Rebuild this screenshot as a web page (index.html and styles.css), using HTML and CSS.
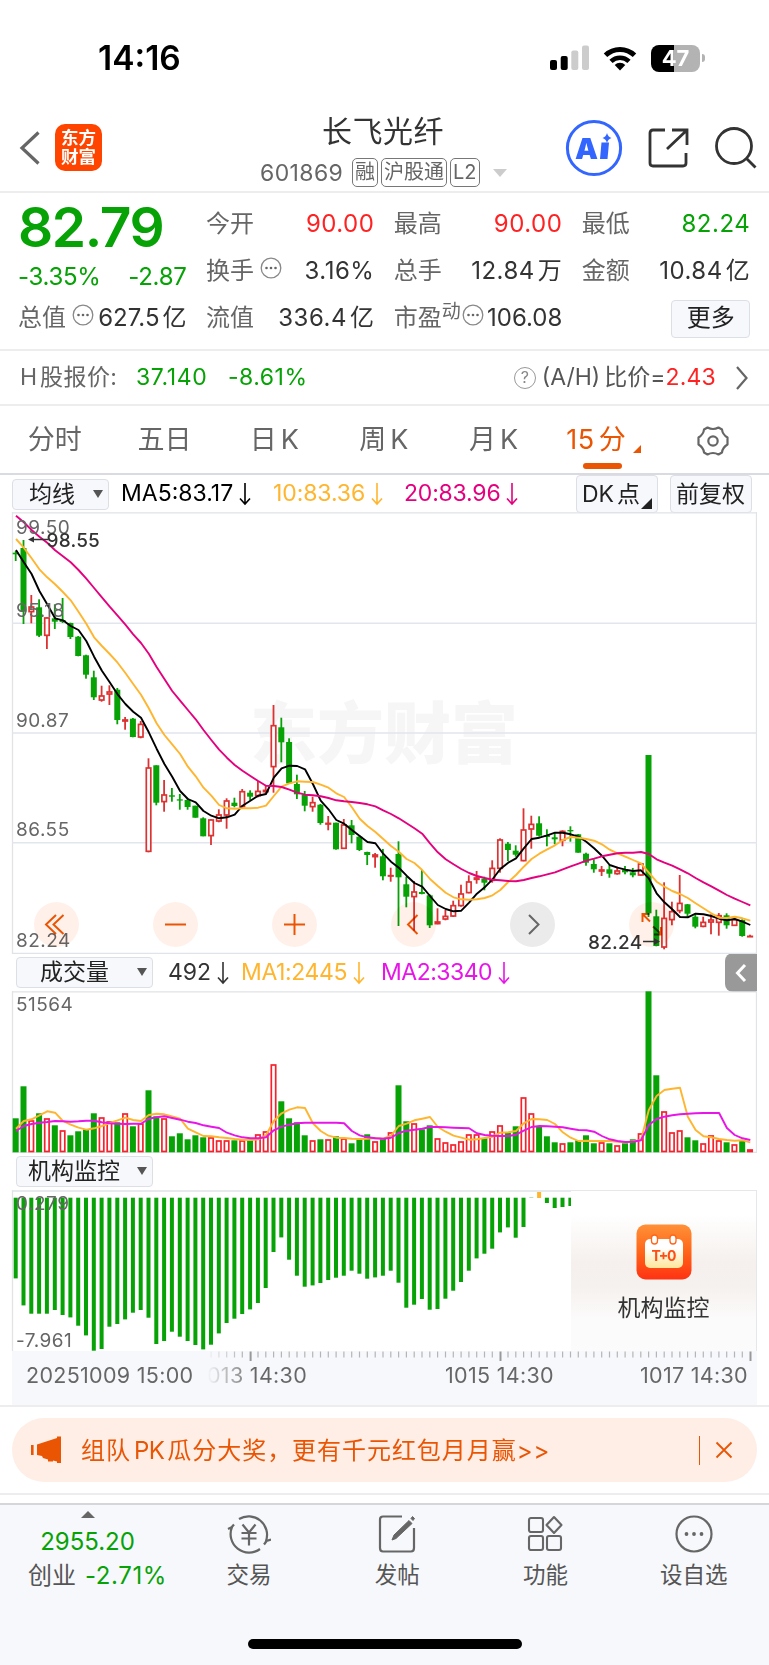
FILE: index.html
```html
<!DOCTYPE html>
<html lang="zh-CN">
<head>
  <meta charset="UTF-8" />
  <meta name="viewport" content="width=device-width, initial-scale=1" />
  <title>长飞光纤 601869</title>
  <link rel="stylesheet" href="styles.css">
</head>
<body>

  <div class="status-bar">
    <span class="clock">14:16</span>
    <div class="status-icons">
      <svg width="40" height="26" viewBox="0 0 40 26">
        <rect x="0" y="15" width="7" height="10" rx="2" />
        <rect x="10.7" y="11" width="7" height="14" rx="2" />
        <rect x="21.3" y="5.5" width="7" height="19.5" rx="2" fill="#ccc" />
        <rect x="32" y="0.5" width="7" height="24.500" rx="2" fill="#ccc" />
      </svg>
      <svg class="wifi" width="34" height="25" viewBox="0 0 34 25">
        <path d="M2.500 9.300a21 21 0 0 1 29 0" fill="none" stroke="#000" stroke-width="5" />
        <path d="M8 15.300a13 13 0 0 1 18 0" fill="none" stroke="#000" stroke-width="4.600" />
        <path d="M17 24.500l-5.300-5.600a7.600 7.600 0 0 1 10.600 0z" />
      </svg>
      <div class="battery"><span>47</span></div>
      <div class="battery-cap"></div>
    </div>
  </div>

  <header class="header">
    <svg class="back" width="22" height="36" viewBox="0 0 22 36"><path d="M19.500 2.500L3 18l16.500 15.500" fill="none" stroke="#666" stroke-width="3.200" /></svg>
    <div class="logo">东方<br>财富</div>
    <div class="title">
      <h1>长飞光纤</h1>
      <div class="code"><span class="number">601869</span><b>融</b><b>沪股通</b><b>L2</b><i></i></div>
    </div>
    <div class="actions">
      <svg width="58" height="58" viewBox="0 0 58 58">
        <circle cx="29" cy="29" r="26.600" fill="#fff" stroke="#3366ff" stroke-width="3" />
        <text x="10" y="39.500" class="ai-text">A</text>
        <path d="M36.500 23.500h7.500l-1.500 16.500h-7.500z" fill="#3366ff" />
        <path d="M42 14q1 4 4.500 5q-3.500 1-4.500 5q-1-4-4.500-5q3.500-1 4.500-5z" fill="#3366ff" />
      </svg>
      <svg width="42" height="42" viewBox="0 0 42 42" fill="none" stroke="#333" stroke-width="2.800">
        <path d="M17 3H5q-3 0-3 3v30q0 3 3 3h30q3 0 3-3V26" />
        <path d="M24 3h15v15M38.500 3.500L19 22" />
      </svg>
      <svg width="44" height="42" viewBox="0 0 44 42" fill="none" stroke="#333" stroke-width="2.800">
        <circle cx="20" cy="19" r="17.500" /><path d="M32 31l9.500 9.500" />
      </svg>
    </div>
  </header>

  <section class="quote">
    <div class="price down">82.79</div>
    <div class="cell"><label>今开</label><span class="up">90.00</span></div>
    <div class="cell"><label>最高</label><span class="up">90.00</span></div>
    <div class="cell"><label>最低</label><span class="down">82.24</span></div>
    <div class="cell change down"><span>-3.35%</span><span>-2.87</span></div>
    <div class="cell"><label>换手<svg class="dots"><use href="#dots" /></svg></label><span>3.16%</span></div>
    <div class="cell"><label>总手</label><span>12.84<em>万</em></span></div>
    <div class="cell"><label>金额</label><span>10.84<em>亿</em></span></div>
    <div class="cell tight"><label>总值<svg class="dots"><use href="#dots" /></svg></label><span>627.5<em>亿</em></span></div>
    <div class="cell"><label>流值</label><span>336.4<em>亿</em></span></div>
    <div class="cell tight"><label>市盈<sup>动</sup><svg class="dots"><use href="#dots" /></svg></label><span>106.08</span></div>
    <div class="cell more"><button>更多</button></div>
  </section>

  <svg class="symbols">
    <symbol id="dots" viewBox="0 0 22 22">
      <circle cx="11" cy="11" r="9.800" fill="none" stroke="#888" stroke-width="1.300" />
      <circle cx="6.500" cy="11" r="1.300" fill="#666" /><circle cx="11" cy="11" r="1.300" fill="#666" /><circle cx="15.500" cy="11" r="1.300" fill="#666" />
    </symbol>
    <symbol id="arrow" viewBox="0 0 12 24">
      <path d="M6 1v21M1 16.500l5 5.500l5-5.500" fill="none" stroke="currentColor" stroke-width="1.600" />
    </symbol>
  </svg>

  <section class="h-share">
    <span class="h-label">H<em>股报价:</em></span>
    <span class="down h-price">37.140</span>
    <span class="down">-8.61%</span>
    <div class="ratio">
      <i class="help">?</i>
      <span class="ratio-label">(A/H)<em>比价=</em></span><span class="up">2.43</span>
      <svg width="14" height="28" viewBox="0 0 14 28"><path d="M2 3l9.500 11L2 25" fill="none" stroke="#666" stroke-width="2.200" /></svg>
    </div>
  </section>

  <nav class="tabs">
    <span>分时</span>
    <span>五日</span>
    <span>日<u>K</u></span>
    <span>周<u>K</u></span>
    <span>月<u>K</u></span>
    <span class="active">15<u>分</u><i></i></span>
    <svg width="34" height="32" viewBox="0 0 34 32" fill="none" stroke="#666" stroke-width="2.200">
      <path d="M11.500 2.500Q17 5.500 22.500 2.500L26 4.500Q26.500 9.500 31.500 12.500V19.500Q26.500 22.500 26 27.500L22.500 29.500Q17 26.500 11.500 29.500L8 27.500Q7.500 22.500 2.500 19.500V12.500Q7.500 9.500 8 4.500Z" stroke-linejoin="round" />
      <circle cx="17" cy="16" r="4.700" />
    </svg>
  </nav>

  <div class="ma-row">
    <div class="select">均线<i></i></div>
    <span class="ma5">MA5:83.17<svg class="arrow"><use href="#arrow" /></svg></span>
    <span class="ma10">10:83.36<svg class="arrow"><use href="#arrow" /></svg></span>
    <span class="ma20">20:83.96<svg class="arrow"><use href="#arrow" /></svg></span>
    <div class="right-buttons">
      <div class="box dk">DK<em>点</em><i></i></div>
      <div class="box">前复权</div>
    </div>
  </div>

  <div class="panel k-panel">
    <svg id="kline" width="757" height="442"></svg>
    <div class="controls">
      <svg width="45" height="45" viewBox="0 0 45 45"><path d="M22 13L12 22.500L22 32M29.500 13L19.500 22.500L29.500 32" /></svg>
      <svg width="45" height="45" viewBox="0 0 45 45"><path d="M12 22.500h21" /></svg>
      <svg width="45" height="45" viewBox="0 0 45 45"><path d="M12 22.500h21M22.500 12v21" /></svg>
      <svg width="45" height="45" viewBox="0 0 45 45"><path d="M26.500 13L17 22.500L26.500 32" /></svg>
      <svg class="next" width="45" height="45" viewBox="0 0 45 45"><path d="M19 13L28.500 22.500L19 32" /></svg>
      <svg width="45" height="45" viewBox="0 0 45 45"><path d="M20.500 12h-7v8M14 12.500l7 7M24 24.500l7.500 7M32 25v7.500h-7" /></svg>
    </div>
  </div>

  <div class="sub-head volume-head">
    <div class="select wide">成交量<i></i></div>
    <span class="vol">492<svg class="arrow"><use href="#arrow" /></svg></span>
    <span class="ma10">MA1:2445<svg class="arrow"><use href="#arrow" /></svg></span>
    <span class="vma2">MA2:3340<svg class="arrow"><use href="#arrow" /></svg></span>
    <div class="drawer"><svg width="14" height="22" viewBox="0 0 14 22"><path d="M11 3L3.500 11L11 19" fill="none" stroke="#fff" stroke-width="3" /></svg></div>
  </div>
  <div class="panel"><svg id="volume" width="757" height="162"></svg></div>

  <div class="sub-head">
    <div class="select wide org">机构监控<i></i></div>
  </div>
  <div class="panel org-panel">
    <svg id="org" width="571" height="161"></svg>
    <div class="org-card">
      <svg width="56" height="56" viewBox="0 0 56 56">
        <defs>
          <linearGradient id="orange" x1="0" y1="0" x2="0" y2="1"><stop offset="0" stop-color="#ff9138" /><stop offset=".5" stop-color="#ff6518" /><stop offset="1" stop-color="#ff3213" /></linearGradient>
          <linearGradient id="cream" x1="0" y1="0" x2="0" y2="1"><stop offset=".3" stop-color="#fff" /><stop offset="1" stop-color="#ffe69a" /></linearGradient>
        </defs>
        <rect x="0.500" y="0.500" width="55" height="55" rx="9" fill="url(#orange)" />
        <rect x="9" y="15" width="38" height="29" rx="5" fill="url(#cream)" />
        <rect x="15.500" y="11" width="6" height="9" rx="3" fill="#fff" stroke="#ff6518" stroke-width="1.300" />
        <rect x="34" y="11" width="6" height="9" rx="3" fill="#fff" stroke="#ff6518" stroke-width="1.300" />
        <text x="28" y="36.500" text-anchor="middle" class="t0" textLength="25">T+0</text>
      </svg>
      <span>机构监控</span>
    </div>
  </div>

  <div class="axis">
    <svg id="ticks" width="745" height="12"></svg>
    <div class="dates"><span>20251009 15:00</span><span class="faded">013 14:30</span><span>1015 14:30</span><span>1017 14:30</span></div>
  </div>

  <div class="ad-wrap">
    <div class="ad">
      <svg width="32" height="28" viewBox="0 0 32 28" fill="#ea5504">
        <rect x="0" y="9" width="2.600" height="10" /><path d="M6 8.500L26 2V0.500h4V27h-4v-1.500l-4-1v1h-5v-2l-5-1.500l-1-2l-5-1z" />
      </svg>
      <span class="ad-text">组队<u>PK</u>瓜分大奖，更有千元红包月月赢&gt;&gt;</span>
      <i class="divider"></i>
      <svg width="18" height="18" viewBox="0 0 18 18"><path d="M1.500 1.500l15 15M16.500 1.500l-15 15" stroke="#ea5504" stroke-width="1.800" /></svg>
    </div>
  </div>

  <footer class="footer">
    <div class="index">
      <i></i>
      <span class="down">2955.20</span>
      <div>创业<span class="down">-2.71%</span></div>
    </div>
    <div class="item">
      <svg width="44" height="40" viewBox="0 0 44 40" fill="none" stroke="#666" stroke-width="2.200">
        <path d="M12 5A18.500 18.500 0 0 1 39 27l5-1.500M37 30.500l3-4M33 35A18.500 18.500 0 0 1 5 13L1 15M3.500 14.500L7 10.500" />
        <path d="M15.500 10.500l6.500 8l6.500-8M14.500 19h15M14.500 24.500h15M22 18.500v13" />
      </svg>
      <span>交易</span>
    </div>
    <div class="item">
      <svg width="38" height="40" viewBox="0 0 38 40" fill="none" stroke="#666" stroke-width="2.200">
        <path d="M24 2.500H5q-3 0-3 3V34q0 3.500 3 3.500h28q3 0 3-3.500V14" />
        <path d="M14 26l2-5L31 6.500l3 3L18 24.500zM33 4.500l1.500-2l2 2l-1.500 2z" fill="#666" stroke-width="1" />
      </svg>
      <span>发帖</span>
    </div>
    <div class="item">
      <svg width="36" height="40" viewBox="0 0 36 40" fill="none" stroke="#666" stroke-width="2.100">
        <rect x="2" y="4" width="14" height="14" rx="2" /><rect x="2" y="22" width="14" height="14" rx="2" /><rect x="20" y="22" width="14" height="14" rx="2" />
        <path d="M27 3l7.500 8l-7.500 8l-7.500-8z" stroke-linejoin="round" />
      </svg>
      <span>功能</span>
    </div>
    <div class="item">
      <svg width="40" height="40" viewBox="0 0 40 40">
        <circle cx="20" cy="20" r="17.500" fill="none" stroke="#666" stroke-width="2.200" />
        <circle cx="12.500" cy="20" r="1.900" fill="#666" /><circle cx="20" cy="20" r="1.900" fill="#666" /><circle cx="27.500" cy="20" r="1.900" fill="#666" />
      </svg>
      <span>设自选</span>
    </div>
    <div class="home-bar"></div>
  </footer>

  <script src="chart.js"></script>
</body>
</html>
```

FILE: styles.css
```css
* {
  box-sizing: border-box;
}

body {
  margin: 0;
  width: 769px;
  height: 1665px;
  overflow: hidden;
  background: #fff;
  color: #333;
  font-family: Inter, "Noto Sans CJK SC", sans-serif;
  font-size: 24px;
  line-height: 1.2;
}

em, i, u {
  font-style: normal;
  text-decoration: none;
}

svg {
  display: block;
  flex-shrink: 0;
}

.symbols {
  display: none;
}

.up { color: #ff2222; }
.down { color: #06a206; }

/* status bar */
.status-bar {
  height: 104px;
  padding: 37px 64px 0 98px;
  display: flex;
  justify-content: space-between;
}

.clock {
  font-size: 33.5px;
  font-weight: 600;
  color: #000;
  line-height: 42px;
}

.status-icons {
  display: flex;
  align-items: center;
  height: 42px;
}

.wifi {
  margin: 0 14px 0 13px;
}

.battery {
  width: 49px;
  height: 27px;
  border-radius: 8px;
  background: linear-gradient(90deg, #000 47%, #b3b3b3 47%);
  color: #fff;
  font-size: 22px;
  font-weight: 700;
  line-height: 27px;
  text-align: center;
}

.battery-cap {
  width: 3px;
  height: 8px;
  margin-left: 2px;
  border-radius: 0 4px 4px 0;
  background: #b3b3b3;
}

/* header */
.header {
  height: 89px;
  border-bottom: 2px solid #ededed;
  padding: 0 11px 0 19px;
  display: grid;
  grid-template-columns: 36px 48px 1fr 193px;
}

.back {
  margin-top: 26px;
}

.logo {
  width: 47px;
  height: 47px;
  margin-top: 20px;
  border-radius: 10px;
  background: #ff4400;
  color: #fff;
  font-size: 17.5px;
  font-weight: 700;
  line-height: 19px;
  text-align: center;
  padding-top: 4px;
}

.title {
  padding-left: 157px;
}

.title h1 {
  margin: 8px 0 0 62px;
  font-size: 30px;
  font-weight: 400;
  line-height: 38px;
  letter-spacing: 0.5px;
  white-space: nowrap;
}

.code {
  margin-top: 8px;
  display: flex;
  align-items: center;
  color: #666;
  font-size: 23px;
  line-height: 28px;
}

.code .number {
  width: 92px;
  letter-spacing: 0.4px;
}

.code b {
  height: 29px;
  margin-right: 3px;
  padding: 0 2px;
  border: 1.5px solid #777;
  border-radius: 5px;
  font-weight: 400;
  font-size: 20px;
  line-height: 26px;
  white-space: nowrap;
}

.code i {
  margin-left: 10px;
  border: 7px solid transparent;
  border-top: 8px solid #ccc;
  border-bottom: 0;
}

.actions {
  display: flex;
  align-items: center;
  justify-content: space-between;
  height: 88px;
}

.ai-text {
  font-size: 29px;
  font-weight: 900;
  fill: #3366ff;
}

/* quote grid */
.quote {
  height: 158px;
  border-bottom: 2px solid #ededed;
  padding: 8px 18px 0;
  display: grid;
  grid-template-columns: repeat(4, 168.5px);
  grid-template-rows: repeat(3, 47px);
  column-gap: 19.4px;
}

.price {
  font-size: 55px;
  font-weight: 600;
  line-height: 53px;
  letter-spacing: -1.4px;
}

.cell {
  display: flex;
  align-items: center;
  justify-content: space-between;
  white-space: nowrap;
}

.cell > span {
  letter-spacing: 0.5px;
}

.cell label {
  display: flex;
  color: #666;
}

.cell em {
  margin-left: 3px;
}

.cell.change {
  padding-top: 12px;
}

.cell.change > span {
  letter-spacing: -0.3px;
}

.cell.tight > span {
  letter-spacing: 0;
}

.cell sup {
  font-size: 19px;
  line-height: 16px;
}

.dots {
  width: 22px;
  height: 22px;
  margin-left: 6px;
}

.tight .dots {
  margin-left: 6px;
}

.tight sup + .dots {
  margin-left: 1px;
}

.more {
  justify-content: flex-end;
}

.more button {
  width: 79px;
  height: 38px;
  padding: 0;
  border: 1.5px solid #dcdfe6;
  border-radius: 4px;
  background: #f7f8fb;
  color: #222;
  font: inherit;
}

/* H share row */
.h-share {
  height: 55px;
  border-bottom: 2px solid #ededed;
  padding: 0 20px;
  display: flex;
  align-items: center;
  font-size: 23px;
}

.h-label {
  width: 116px;
  color: #666;
}

.h-label em {
  margin-left: 3px;
  letter-spacing: 0.4px;
}

.h-price {
  width: 92px;
  letter-spacing: 0.6px;
}

.h-price + span {
  letter-spacing: 0.5px;
}

.ratio {
  margin-left: auto;
  display: flex;
  align-items: center;
  white-space: nowrap;
}

.ratio-label {
  color: #555;
}

.ratio em {
  margin-left: 4px;
}

.help {
  width: 22px;
  height: 22px;
  margin-right: 6px;
  border: 1.4px solid #999;
  border-radius: 50%;
  color: #888;
  font-size: 16px;
  line-height: 19px;
  text-align: center;
}

.ratio svg {
  margin-left: 19px;
}

.ratio .up {
  letter-spacing: 0.2px;
}

/* period tabs */
.tabs {
  height: 69px;
  border-bottom: 2px solid #d9dbe1;
  padding-top: 2px;
  display: grid;
  grid-template-columns: repeat(7, 109.700px);
  justify-items: center;
  align-items: center;
  color: #666;
  font-size: 27px;
}

.tabs u {
  margin-left: 4px;
}

.tabs .active {
  position: relative;
  width: 74px;
  color: #ea5504;
  letter-spacing: 0.5px;
}

.active::after {
  content: "";
  position: absolute;
  left: 17px;
  bottom: -12px;
  width: 39px;
  height: 6px;
  border-radius: 3px;
  background: #ea5504;
}

.active i {
  position: absolute;
  right: -1px;
  bottom: 4px;
  border-left: 8px solid transparent;
  border-bottom: 8px solid #ea5504;
}

/* indicator rows */
.ma-row, .sub-head {
  display: flex;
  align-items: center;
  height: 38px;
  padding-left: 12px;
  font-size: 23px;
  white-space: nowrap;
}

.ma-row {
  height: 37px;
  padding-top: 1px;
}

.ma-row > span, .sub-head > span {
  display: flex;
  align-items: center;
}

.select {
  position: relative;
  width: 97px;
  height: 31px;
  padding-left: 16px;
  border: 1.5px solid #dcdfe6;
  border-radius: 4px;
  background: #f7f8fb;
  color: #222;
  line-height: 29px;
}

.select i {
  position: absolute;
  right: 5px;
  top: 10px;
  border: 5px solid transparent;
  border-top: 8px solid #555;
  border-bottom: 0;
}

.arrow {
  width: 12px;
  height: 24px;
  margin-left: 6px;
}

.ma5 { width: 152px; margin-left: 12px; color: #000; }
.ma10 { width: 131px; color: #ffb52e; letter-spacing: -0.1px; }
.ma20 { color: #e4007f; letter-spacing: -0.2px; }
.vma2 { color: #e815e8; letter-spacing: -0.5px; }

.right-buttons {
  display: flex;
  gap: 12px;
  margin: 0 17px 0 auto;
}

.box {
  position: relative;
  width: 82px;
  height: 38px;
  border: 1.5px solid #dcdfe6;
  border-radius: 4px;
  background: #f7f8fb;
  color: #222;
  line-height: 36px;
  padding-left: 5px;
}

.box em {
  margin-left: 3px;
}

.dk i {
  position: absolute;
  right: 5px;
  bottom: 3px;
  border-left: 11px solid transparent;
  border-bottom: 11px solid #222;
}

.sub-head {
  height: 37px;
  padding-left: 16px;
}

.sub-head .ma10 {
  width: 140px;
  letter-spacing: -0.4px;
}

.wide {
  width: 137px;
  padding-left: 23px;
}

.wide.org {
  padding-left: 11px;
}

.vol {
  width: 73px;
  margin-left: 15px;
}

.drawer {
  width: 32px;
  height: 39px;
  margin: 0 12px 0 auto;
  border-radius: 8px 0 0 8px;
  background: #999;
  display: flex;
  align-items: center;
  justify-content: center;
}

/* charts */
.panel {
  position: relative;
  width: 757px;
}

.label {
  font-size: 19px;
  letter-spacing: 0.5px;
  fill: #666;
}

.mark {
  font-size: 19px;
  letter-spacing: 0.2px;
  font-weight: 500;
  fill: #333;
}

.watermark {
  font-size: 67px;
  font-weight: 900;
  fill: #f6f6f6;
}

.controls {
  position: absolute;
  left: 33.5px;
  top: 390px;
  display: flex;
  gap: 74px;
  mix-blend-mode: multiply;
}

.controls svg {
  border-radius: 50%;
  background: #fff1ea;
  fill: none;
  stroke: #ea5504;
  stroke-width: 2;
}

.controls .next {
  background: #ebebeb;
  stroke: #666;
}

.org-panel {
  display: flex;
}

.org-card {
  width: 186px;
  height: 161px;
  padding-top: 33px;
  border-top: 1px solid #e5e7eb;
  border-right: 1px solid #e5e7eb;
  background: linear-gradient(#fff 15%, #f5f0ed 45%, #f5f1ee 60%, #fcfbfb 80%, #fbfbfc);
  display: flex;
  flex-direction: column;
  align-items: center;
  gap: 15px;
  font-size: 23px;
}

.t0 {
  font-size: 14px;
  font-weight: 700;
  fill: #ff4d14;
}

.axis {
  width: 745px;
  height: 54px;
  margin-left: 12px;
  background: #f7f8fb;
}

.dates {
  padding: 0 9px 0 14px;
  display: flex;
  font-size: 21.5px;
  letter-spacing: 0.3px;
  line-height: 24px;
  color: #666;
}

.dates span:nth-child(1) { width: 181px; }
.dates span:nth-child(2) { width: 238px; }
.dates span:nth-child(4) { margin-left: auto; }

.dates .faded {
  color: transparent;
  background: linear-gradient(90deg, #f7f8fb, #666 20%);
  -webkit-background-clip: text;
  background-clip: text;
}

/* promo strip */
.ad-wrap {
  height: 90px;
  border-top: 2px solid #ededf0;
  border-bottom: 2px solid #ededf0;
  padding: 11px 12px;
}

.ad {
  height: 64px;
  border-radius: 32px;
  background: #feeee6;
  padding: 0 24px 0 19px;
  display: flex;
  align-items: center;
  color: #ea5504;
}

.ad-text {
  margin: 2px 0 0 18px;
  font-size: 24px;
  letter-spacing: 0.95px;
  white-space: nowrap;
}

.ad-text u {
  margin: 0 3px;
  letter-spacing: -0.5px;
}

.divider {
  width: 1.5px;
  height: 29px;
  margin: 0 15px 0 auto;
  background: #ea5504;
}

/* bottom bar */
.footer {
  position: relative;
  height: 162px;
  margin-top: 8px;
  border-top: 2px solid #d5d6da;
  background: #f7f8fb;
  display: flex;
  color: #555;
}

.index {
  width: 175px;
  padding-top: 6px;
  display: flex;
  flex-direction: column;
  align-items: center;
}

.index i {
  border: 7px solid transparent;
  border-bottom: 7px solid #666;
  border-top: 0;
}

.index > span {
  margin-top: 10px;
}

.index > div {
  margin: 5px 0 0 20px;
  white-space: nowrap;
}

.index > div span {
  margin-left: 9px;
  letter-spacing: 0.6px;
}

.item {
  width: 148.2px;
  padding-top: 9px;
  display: flex;
  flex-direction: column;
  align-items: center;
  gap: 7px;
  font-size: 22.5px;
}

.home-bar {
  position: absolute;
  left: 248px;
  bottom: 16px;
  width: 274px;
  height: 10px;
  border-radius: 5px;
  background: #000;
}
```

FILE: chart.js
```js
const GREEN = "#06a206";
const RED = "#dc3232";
const STEP = 7.812;
const X0 = 15.7;

// color, high, low, body top, body bottom
const candles = `g39,49,40.7,42.3 g28,112,36,99.7 r83,111.3,94.3,100.3 g87.3,125,95.3,123.7 r105.3,137,105.3,124
g92.3,117,106.3,109.7 g86,111,108,110 g110.7,127,111,125 g124,144.3,124.7,144 g142.7,166.7,143.3,162.7
g158.7,188,165.3,185.3 r173.7,189.7,183.3,188.7 r173.3,193,179.3,182.7 g176,212.3,177.7,208 r205,217.7,207.3,209.7
g206,225.3,206.7,225 r209,226.3,211.7,225.7 r246.3,340.3,255.3,340 g253.3,293.3,253.3,290.7 r268,299.7,282.3,290.3
g276,289.7,283.3,284.7 g282,297.7,287.3,288.3 g286.3,297.7,288,295 g293.7,305.7,293.7,305.7 g305.3,324.3,306.3,324.3
r307.3,333,307.3,324.3 r297.3,310.3,302.3,309.7 r286.3,316.7,288.3,303.7 g285.7,295.3,290.7,294 r277,295.7,279,295.3
g278.3,288.3,280.7,284.7 r269,285.3,278.7,284.3 r273.3,281.3,277.7,280.3 r193,280.7,213,255.3 g205.7,250.3,215.3,230.3
g226.3,272,230,271.3 g262.7,287,272,282.3 g279,299.3,283,293.7 r284.7,299.7,290,295.3 g292,312.7,292.7,311
r304,318.3,310.7,312.7 g310.7,337.7,310.7,337.3 r307,337,312.3,337 g308,331.3,313.3,323 g323.3,339,324.7,338
g339.7,353,340,343 r341,355.7,342.3,345.3 g337,368.3,344.3,364.3 r355.7,369.7,363,364.3 g329.3,414,342,365.3
g364.7,395.3,372.3,384.7 r369,418.7,379.3,385.3 g358,382.3,380,382 g382.3,416,383.3,413.3 r396.3,412.3,409.3,412.3
r398,408.3,403.7,407.7 r388.7,405,393,404.7 r372.7,394.7,381.3,394.3 r363.3,381.3,369.3,381.3 r359,371.7,365.3,368
g364.7,378.3,366.7,370.7 r348.3,370.7,355.7,369 r326.3,360.7,327.3,357 g330,349,331.7,338 g333.3,344.7,338.7,342.7
r296.3,349.3,317.3,349.3 r303.7,336.7,311.7,317.7 g304.3,324.7,311.3,323.7 g317.3,334.3,323.3,325 g320.7,332.3,325.3,327.3
r318.3,334.3,318.7,329 g314.3,329.7,318,319.3 g322,340.7,322.3,340.7 g340.7,353.7,341.7,350.7 g347.3,360.7,352,357.3
r354,364,357.3,359.7 g353,365.7,357.3,361.7 r354.7,362.7,358.3,362.3 g354,362.3,358,360.3 g356,365.3,360.3,363.3
r351.3,363.7,351.3,363.7 g243,405,243,401.3 g397.7,434.3,404.3,434 r370.3,437.3,405.7,435.7 r389.7,413.3,399,408.3
r363,401.3,390.7,399.3 g392,404.7,392.3,401.7 g402.3,416.3,404.7,414.7 r404.7,415.3,409.7,415 r402.3,422.3,407.3,410.7
r401,423.7,403,411 g401.3,416.7,403.3,413.3 r407,414,407,414 g407.3,424.7,408,424 r422.7,425,423.7,424.7`.split(/\s+/);

const ma5 = [38,50.3,62,79,92.3,106.3,108.3,114,118,129,144.7,158.7,170.3,182.3,192,199.7,205.7,220.3,236.7,252,264.7,279,287,290.3,299,303.7,306.3,305.3,302.7,293.7,288.7,283.7,282,265.7,256.3,253.7,254,257.3,272,288.7,297.3,308,311.7,318,324,330,331.3,341.7,349.7,355.7,363.7,371,374.7,384,393,397,399.3,398.7,390.7,381.7,375.3,367.3,357,350.7,346.3,336.3,327,325.7,323.3,320.7,320.7,322.3,324.7,329.7,336.3,343.7,353,355.7,357.7,359,358.3,366.3,381.3,390.3,397.3,405,405.3,401.7,402.3,404,406.7,408.3,407,409.7,413];
const ma10 = [27,35.7,46.3,57.3,65.3,72.3,80,88.3,99.7,111.7,125.3,134,142,150.7,161,172,182.7,196.3,211.3,223,232.3,242,254.7,264.3,275.7,283.7,293,296.3,296.7,296.3,296.3,295.7,293.7,284,274.7,271.3,269.3,269.7,270,272.7,275.7,281.3,285,295.3,306.7,314,320,327,334,339.7,347,351,358,367,374,380.7,385.3,387.3,387.7,387.3,386,383.3,378,370,363,354.7,347,341.7,337.3,333.3,328,325,325.7,327,328.7,332.3,337.7,341.3,344.7,348,351.3,360.7,369.7,374.7,379,382,386,391.3,396.3,401.3,405.7,406,404.7,406.3,408.7];
const ma20 = [3.7,10.3,18,24.7,30.7,38.3,44.3,50.3,58,66.7,76,85.3,94.7,103.7,112.7,122.3,131,141.7,155,167,179,188.7,198,207.3,218,228,237.7,245.7,253,258.7,264,269,273.7,274,275,277.7,280.7,282.7,283.3,284.3,286,288.3,289.3,290,291,292.3,294.3,298.3,302,306.3,311.3,316.3,321.7,331.3,340.3,347.3,352.3,357,361,364,366,367.7,368.3,369,369.3,368,366,364.3,362.3,360.3,357.3,354.3,351.7,348.7,346.7,344.3,342.7,341.3,340.7,340.7,340,342,347.3,350.7,353.7,357.3,361.3,366,370.3,374.3,378.7,383,386.7,390,393.3];

const volumes = "g34 g66 r32 g39 r34 g27 r22 g17 g21 g23 g39 r35 r31 g30 r39 g26 r29 g62 g36 r34 g16 g19 g13 g17 g15 r15 r12 r12 g12 r12 g12 r18 r21 r88 g51 g34 g30 g17 r12 g13 r13 g16 r14 g9 g13 g18 r11 g14 r20 g67 g31 r29 g23 g27 r14 r10 r8 r11 r18 r18 g14 r21 r27 g20 g26 r55 r39 g26 g16 g10 r9 g10 g12 g17 g9 r10 g9 r7 g9 g13 r19 g161 g77 r41 r20 r22 g15 g12 r9 r17 r12 g10 r8 g12 r3".split(" ");
// volume averages are kept at 3x pixel density
const vma1 = [536,513,508,496,484,488,513,524,533,539,535,528,519,511,503,510,513,495,491,493,499,506,536,547,558,559,562,564,567,569,570,568,556,513,490,479,472,474,520,543,557,563,564,566,567,566,564,566,557,528,521,511,506,501,531,545,557,563,569,568,564,560,548,547,543,520,507,508,510,522,547,563,573,572,573,573,573,575,577,574,570,480,438,420,416,413,500,540,559,562,567,570,572,571,577];
const vma2 = [543,528,522,518,516,513,514,515,514,512,512,517,520,521,522,521,521,506,502,499,504,509,515,519,526,530,534,548,556,562,565,565,562,541,530,524,520,518,518,518,518,518,520,543,556,562,565,566,563,549,542,539,536,531,531,532,533,534,535,550,555,557,558,558,554,542,531,528,529,530,532,536,540,541,545,558,568,573,576,575,571,525,507,500,496,493,491,490,489,489,489,534,555,565,570];

const org = [385,466,491,491,491,480,495,502,527,556,602,597,530,522,508,488,480,503,582,573,545,560,573,585,598,584,550,519,506,492,478,459,414,306,262,329,377,410,406,399,390,383,377,362,371,386,382,377,362,398,473,464,447,479,477,446,422,396,362,325,311,296,247,232,263,231,144,0,159,174,171,168];

const rect = (x, y, w, h, fill, stroke) =>
  `<rect x="${x.toFixed(1)}" y="${y.toFixed(1)}" width="${w}" height="${h.toFixed(1)}" fill="${fill}"${stroke ? ` stroke="${stroke}" stroke-width="1.7"` : ""}/>`;
const line = (points, color) =>
  `<polyline points="${points.map((y, i) => (X0 + 0.3 + i * STEP).toFixed(1) + "," + y.toFixed(1)).join(" ")}" fill="none" stroke="${color}" stroke-width="1.9" stroke-linejoin="round"/>`;
const text = (x, y, value, cls) => `<text x="${x}" y="${y}" class="${cls}">${value}</text>`;
const frame = h => `<path d="M12.500 0V${h}M756.500 0V${h}M12 0.800H757M12 ${h - 0.700}H757" stroke="#e0e3e8" stroke-width="1.300"/>`;

function drawKline() {
  let s = text(250, 246, "东方财富", "watermark") + frame(442);
  [111.3, 221, 330.7].forEach(y => s += `<path d="M12 ${y}H757" stroke="#e1e5ed" stroke-width="1.500"/>`);
  candles.forEach((c, i) => {
    const color = c[0] === "g" ? GREEN : RED;
    const [high, low, top, bottom] = c.slice(1).split(",").map(Number);
    const x = X0 + i * STEP;
    s += rect(x - 0.9, high, 1.8, low - high, color);
    if (c[0] === "g") s += rect(x - 3, top, 6, Math.max(bottom - top, 1.3), color);
    else s += rect(x - 2.2, top + 0.7, 4.5, Math.max(bottom - top - 1.4, 0.3), "#fff", color);
  });
  s += line(ma5, "#000") + line(ma10, "#ffb52e") + line(ma20, "#e4007f");
  s += text(16, 22, "99.50", "label") + text(16, 105, "95.18", "label") + text(16, 215, "90.87", "label");
  s += text(16, 324, "86.55", "label") + text(16, 435, "82.24", "label");
  s += text(46.5, 35, "98.55", "mark") + text(588, 437, "82.24", "mark");
  s += `<path d="M34 27.500h14M643 429.500h12" stroke="#333" stroke-width="1.500"/><path d="M28 27.500l6-3v6zM660 429.500l-6-3.500v7z" fill="#333"/>`;
  document.getElementById("kline").innerHTML = s;
}

function drawVolume() {
  let s = frame(162);
  volumes.forEach((v, i) => {
    const h = +v.slice(1);
    const x = X0 + i * STEP;
    if (v[0] === "g") s += rect(x - 3, 161.3 - h, 6, h, GREEN);
    else s += rect(x - 2.2, 162 - h, 4.4, h - 1.5, "#fff", "#f5222d");
  });
  s += line(vma1.map(y => y / 3 - 41), "#ffb52e") + line(vma2.map(y => y / 3 - 41), "#e815e8");
  s += text(16, 20, "51564", "label");
  document.getElementById("volume").innerHTML = s;
}

function drawOrg() {
  let s = `<path d="M12.500 0V161M12 1H571" stroke="#e0e3e8" stroke-width="1.300" fill="none"/>`;
  org.forEach((v, i) => {
    const x = X0 + i * STEP;
    if (v) s += rect(x - 2, 7.7, 4, (v - 143) / 3, GREEN);
    else s += rect(x - 2, 2, 4, 6, "#ffb52e");
  });
  s += text(16, 20, "0.279", "label") + text(16, 157, "-7.961", "label");
  document.getElementById("org").innerHTML = s;
}

function drawTicks() {
  let s = "";
  for (let i = 25; i <= 94; i++) {
    const big = i === 30 || i === 62 || i === 94;
    s += `<g opacity="${Math.min(1, (i - 24) / 5)}">` + rect(3.2 + i * STEP, 0.5, big ? 2 : 1.2, big ? 9.5 : 6, big ? "#999" : "#b5b5b5") + "</g>";
  }
  document.getElementById("ticks").innerHTML = s;
}

drawKline();
drawVolume();
drawOrg();
drawTicks();
```
